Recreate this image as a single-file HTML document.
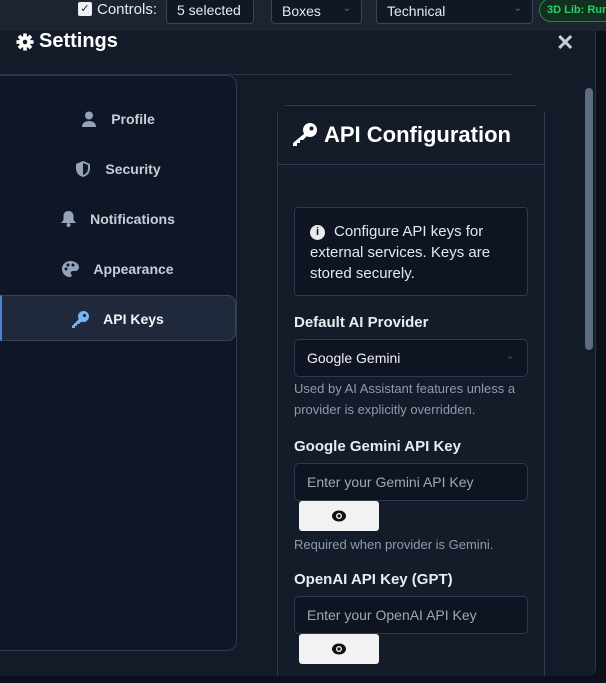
<!DOCTYPE html>
<html><head><style>
*{box-sizing:border-box;margin:0;padding:0}
html,body{width:606px;height:683px;overflow:hidden}
body{background:#0b101a;font-family:"Liberation Sans",sans-serif;position:relative}
.top{position:absolute;left:0;top:0;width:606px;height:31px;background:#1c2430}
.abs{position:absolute}
.sel{position:absolute;top:-2px;height:26px;border:1px solid #3a4455;border-radius:4px;background:#101725;color:#e8eaef;font-size:14px;padding:3px 10px}
.modal{position:absolute;left:0;top:31px;width:596px;height:645px;background:#131a28;border-bottom-right-radius:8px;border-right:1px solid #2a3344}
.nav{position:absolute;left:-1px;top:75px;width:238px;height:576px;border:1px solid #2f3a4c;border-radius:0 10px 10px 0;background:#0f1626}
.item{position:absolute;left:0;width:236px;height:46px;color:#c8ced8;font-weight:bold;font-size:14px;display:flex;align-items:center;justify-content:center;gap:14px}
.item svg{fill:#94a3b8}
.card{position:absolute;left:277px;top:112px;width:268px;height:564px;border-left:1px solid #2f3a4c;border-right:1px solid #2f3a4c;background:#141b29}
.lbl{position:absolute;left:294px;color:#e9edf2;font-weight:bold;font-size:15px}
.inp{position:absolute;left:294px;width:234px;height:38px;border:1px solid #2f3a4c;border-radius:5px;background:#0e1421;color:#a0a8b4;font-size:14px;padding:10px 12px}
.hint{position:absolute;left:294px;width:234px;color:#8f9aab;font-size:13px;line-height:21px}
.eye{position:absolute;left:299px;width:80px;height:30px;background:#f2f2f2;border-radius:3px;display:flex;align-items:center;justify-content:center}
</style></head><body>
<div class="top">
 <div class="abs" style="left:78px;top:2px;width:14px;height:14px;background:#eef0f3;border-radius:2px;color:#222;font-size:11px;text-align:center;line-height:14px">✓</div>
 <div class="abs" style="left:97px;top:1px;color:#e8eaef;font-size:15px">Controls:</div>
 <div class="sel" style="left:166px;width:88px">5 selected</div>
 <div class="sel" style="left:271px;width:91px;padding-top:4px">Boxes <span style="position:absolute;right:10px;color:#667;font-size:10px">⌄</span></div>
 <div class="sel" style="left:376px;width:157px;padding-top:4px">Technical <span style="position:absolute;right:10px;color:#667;font-size:10px">⌄</span></div>
 <div class="abs" style="left:539px;top:-2px;width:80px;height:24px;border:1px solid #1e8a48;border-radius:12px;background:#12301f;color:#2ecc6a;font-weight:bold;font-size:11px;padding:5px 7px">3D Lib: Run</div>
</div>
<div class="modal">
 <div class="abs" style="left:0;top:43px;width:513px;border-top:1px solid #2a3444"></div>
</div>
<div class="abs" style="left:16px;top:30px;color:#fff;font-weight:bold;font-size:20px;display:flex;align-items:center;gap:5px">
 <svg width="18" height="18" viewBox="0 0 20 20"><circle cx="10" cy="10" r="6.5" fill="#fff"/><g fill="#fff"><rect x="8" y="0.5" width="4" height="4"/><rect x="8" y="15.5" width="4" height="4"/><rect x="0.5" y="8" width="4" height="4"/><rect x="15.5" y="8" width="4" height="4"/><rect x="8" y="0.5" width="4" height="4" transform="rotate(45 10 10)"/><rect x="8" y="15.5" width="4" height="4" transform="rotate(45 10 10)"/><rect x="0.5" y="8" width="4" height="4" transform="rotate(45 10 10)"/><rect x="15.5" y="8" width="4" height="4" transform="rotate(45 10 10)"/></g><circle cx="10" cy="10" r="2.5" fill="#131a28"/></svg>Settings</div>
<div class="abs" style="left:556px;top:30px;color:#c9ced6;font-size:22px;font-weight:bold">✕</div>
<div class="abs" style="left:585px;top:88px;width:8px;height:262px;background:#5f6b80;border-radius:4px"></div>
<div class="nav"></div>
<div class="item" style="top:96px"><svg width="16" height="16" viewBox="0 0 16 16"><circle cx="8" cy="4.5" r="4"/><path d="M1 16c0-4 3-6 7-6s7 2 7 6z"/></svg>Profile</div>
<div class="item" style="top:146px"><svg width="16" height="16" viewBox="0 0 16 16"><path d="M8 0L1 3v4c0 5 3 8 7 9 4-1 7-4 7-9V3z"/><path d="M8 2v12c3-1 5-3 5-7V4z" fill="#0f1626"/></svg>Security</div>
<div class="item" style="top:196px"><svg width="15" height="16" viewBox="0 0 15 16"><path d="M7.5 0c-3 0-5 2-5 5v4L0 12h15l-2.5-3V5c0-3-2-5-5-5z"/><circle cx="7.5" cy="14" r="2"/></svg>Notifications</div>
<div class="item" style="top:246px"><svg width="17" height="16" viewBox="0 0 17 16"><path d="M8.5 0C3 0 0 4 0 8s3 8 8 8c2 0 2-2 1-3s0-3 2-3h2c3 0 4-2 4-4C17 3 13 0 8.5 0z"/><circle cx="4" cy="8" r="1.5" fill="#0f1626"/><circle cx="6" cy="4" r="1.5" fill="#0f1626"/><circle cx="11" cy="4" r="1.5" fill="#0f1626"/></svg>Appearance</div>
<div class="abs" style="left:0;top:295px;width:236px;height:46px;background:#1f293b;border:1px solid #34435c;border-left:2px solid #4b86d6;border-radius:0 8px 8px 0"></div>
<div class="item" style="top:296px;color:#f2f4f7"><svg width="17" height="17" viewBox="0 0 17 17"><circle cx="11.5" cy="5.5" r="5.5" fill="#7ab3f5"/><path d="M8 7L0 15v2h3v-2h2v-2h2l3-3z" fill="#7ab3f5"/><circle cx="12.5" cy="4.5" r="1.5" fill="#0f1626"/></svg>API Keys</div>
<div class="abs" style="left:285px;top:105px;width:251px;border-top:1px solid #2f3a4c"></div>
<div class="card"></div>
<div class="abs" style="left:278px;top:164px;width:266px;border-top:1px solid #2f3a4c"></div>
<div class="abs" style="left:292px;top:122px;color:#fff;font-weight:bold;font-size:22px;display:flex;align-items:center;gap:6px"><svg width="26" height="24" viewBox="0 0 26 24"><circle cx="18" cy="7" r="7" fill="#fff"/><path d="M13 10L1 20v3h4v-3h3v-3h3l5-5z" fill="#fff"/><circle cx="19.5" cy="5.5" r="2" fill="#141b29"/></svg>API Configuration</div>
<div class="abs" style="left:294px;top:207px;width:234px;height:89px;border:1px solid #2f3a4c;border-radius:4px;background:#0e1421;color:#e4e8ee;font-size:15px;line-height:21px;padding:13px 15px">
 <span style="display:inline-block;width:15px;height:15px;border-radius:50%;background:#e8ebf0;color:#111;font-size:11px;font-weight:bold;text-align:center;line-height:15px;vertical-align:1px;margin-right:9px">i</span>Configure API keys for external services. Keys are stored securely.</div>
<div class="lbl" style="top:314px">Default AI Provider</div>
<div class="inp" style="top:339px;color:#eef0f3">Google Gemini<span style="position:absolute;right:12px;top:9px;color:#556;font-size:11px">⌄</span></div>
<div class="hint" style="top:378px">Used by AI Assistant features unless a provider is explicitly overridden.</div>
<div class="lbl" style="top:438px">Google Gemini API Key</div>
<div class="inp" style="top:463px">Enter your Gemini API Key</div>
<div class="eye" style="top:501px"><svg width="14" height="12" viewBox="0 0 14 12"><ellipse cx="7" cy="6" rx="7" ry="5.5" fill="#111"/><circle cx="7" cy="6" r="3" fill="#f2f2f2"/><circle cx="7" cy="6" r="1.6" fill="#111"/></svg></div>
<div class="hint" style="top:534px">Required when provider is Gemini.</div>
<div class="lbl" style="top:571px">OpenAI API Key (GPT)</div>
<div class="inp" style="top:596px">Enter your OpenAI API Key</div>
<div class="eye" style="top:634px"><svg width="14" height="12" viewBox="0 0 14 12"><ellipse cx="7" cy="6" rx="7" ry="5.5" fill="#111"/><circle cx="7" cy="6" r="3" fill="#f2f2f2"/><circle cx="7" cy="6" r="1.6" fill="#111"/></svg></div>
</body></html>
